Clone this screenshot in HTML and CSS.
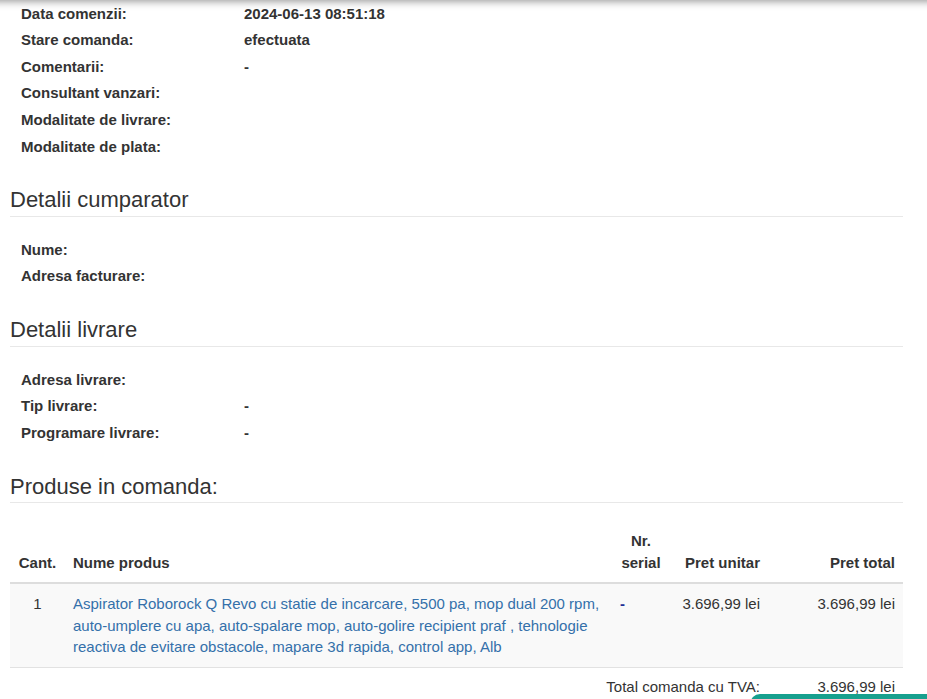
FILE: index.html
```html
<!DOCTYPE html>
<html lang="ro">
<head>
    <meta charset="UTF-8">
    <meta name="viewport" content="width=device-width, initial-scale=1.0">
    <title>Detalii comanda</title>
    <link rel="stylesheet" href="styles.css">
</head>
<body>
    <div class="top-shadow"></div>

    <div class="container">
        <div class="info">
            <div class="info-row"><span class="info-label">Data comenzii:</span><span class="info-value">2024-06-13 08:51:18</span></div>
            <div class="info-row"><span class="info-label">Stare comanda:</span><span class="info-value">efectuata</span></div>
            <div class="info-row"><span class="info-label">Comentarii:</span><span class="info-value">-</span></div>
            <div class="info-row"><span class="info-label">Consultant vanzari:</span><span class="info-value"></span></div>
            <div class="info-row"><span class="info-label">Modalitate de livrare:</span><span class="info-value"></span></div>
            <div class="info-row"><span class="info-label">Modalitate de plata:</span><span class="info-value"></span></div>
        </div>

        <h3 class="page-header">Detalii cumparator</h3>
        <div class="info">
            <div class="info-row"><span class="info-label">Nume:</span><span class="info-value"></span></div>
            <div class="info-row"><span class="info-label">Adresa facturare:</span><span class="info-value"></span></div>
        </div>

        <h3 class="page-header">Detalii livrare</h3>
        <div class="info">
            <div class="info-row"><span class="info-label">Adresa livrare:</span><span class="info-value"></span></div>
            <div class="info-row"><span class="info-label">Tip livrare:</span><span class="info-value">-</span></div>
            <div class="info-row"><span class="info-label">Programare livrare:</span><span class="info-value">-</span></div>
        </div>

        <h3 class="page-header">Produse in comanda:</h3>
        <table class="products">
            <colgroup>
                <col class="col-qty">
                <col class="col-name">
                <col class="col-serial">
                <col class="col-unit">
                <col class="col-total">
            </colgroup>
            <thead>
                <tr>
                    <th class="center">Cant.</th>
                    <th>Nume produs</th>
                    <th class="center">Nr. serial</th>
                    <th class="right">Pret unitar</th>
                    <th class="right">Pret total</th>
                </tr>
            </thead>
            <tbody>
                <tr class="striped">
                    <td class="center">1</td>
                    <td><a href="#" class="product-link">Aspirator Roborock Q Revo cu statie de incarcare, 5500 pa, mop dual 200 rpm, auto-umplere cu apa, auto-spalare mop, auto-golire recipient praf , tehnologie reactiva de evitare obstacole, mapare 3d rapida, control app, Alb</a></td>
                    <td><a href="#" class="serial-link">-</a></td>
                    <td class="right">3.696,99 lei</td>
                    <td class="right">3.696,99 lei</td>
                </tr>
                <tr class="total-row">
                    <td colspan="4" class="right">Total comanda cu TVA:</td>
                    <td class="right">3.696,99 lei</td>
                </tr>
            </tbody>
        </table>
    </div>

    <div class="chat-tab"></div>
</body>
</html>
```

FILE: styles.css
```css
body {
    font-family: "Liberation Sans", Arial, sans-serif;
    font-size: 15px;
    line-height: 1.42857;
    color: #333;
    margin: 0;
    background-color: #fff;
}
.top-shadow {
    position: fixed;
    top: -20px;
    left: -20px;
    right: -20px;
    height: 20px;
    box-shadow: 0 1px 9px rgba(0,0,0,0.45);
    z-index: 5;
}
.container {
    padding: 0 24px 40px 10px;
}
.info {
    padding-left: 11px;
}
.info-row {
    display: grid;
    grid-template-columns: 223px 1fr;
    padding: 2.6px 0;
    min-height: 21.4px;
}
.info-label,
.info-value {
    font-weight: bold;
}
.page-header {
    font-size: 22px;
    font-weight: normal;
    line-height: 1.1;
    margin: 28.8px 0 19px;
    padding-bottom: 3.6px;
    border-bottom: 1px solid #e8e8e8;
}
.products {
    width: 100%;
    table-layout: fixed;
    border-collapse: collapse;
    margin-top: 4px;
}
.col-qty { width: 55px; }
.col-name { width: 547px; }
.col-serial { width: 58px; }
.col-unit { width: 98px; }
.col-total { width: 135px; }
.products th,
.products td {
    padding: 8px;
    text-align: left;
    vertical-align: top;
}
.products th {
    font-weight: bold;
    vertical-align: bottom;
    padding-bottom: 9px;
    border-bottom: 2px solid #ddd;
}
.products .center {
    text-align: center;
}
.products .right {
    text-align: right;
}
.striped td {
    background-color: #f9f9f9;
    padding-top: 9px;
    padding-bottom: 9px;
    border-bottom: 1px solid #e2e2e2;
}
.product-link {
    color: #3470aa;
    text-decoration: none;
}
.serial-link {
    color: #1f2f96;
    text-decoration: none;
    font-weight: bold;
}
.chat-tab {
    position: fixed;
    left: 750px;
    right: 0;
    top: 694px;
    height: 30px;
    background-color: #17a08e;
    border-top-left-radius: 10px;
}
```
